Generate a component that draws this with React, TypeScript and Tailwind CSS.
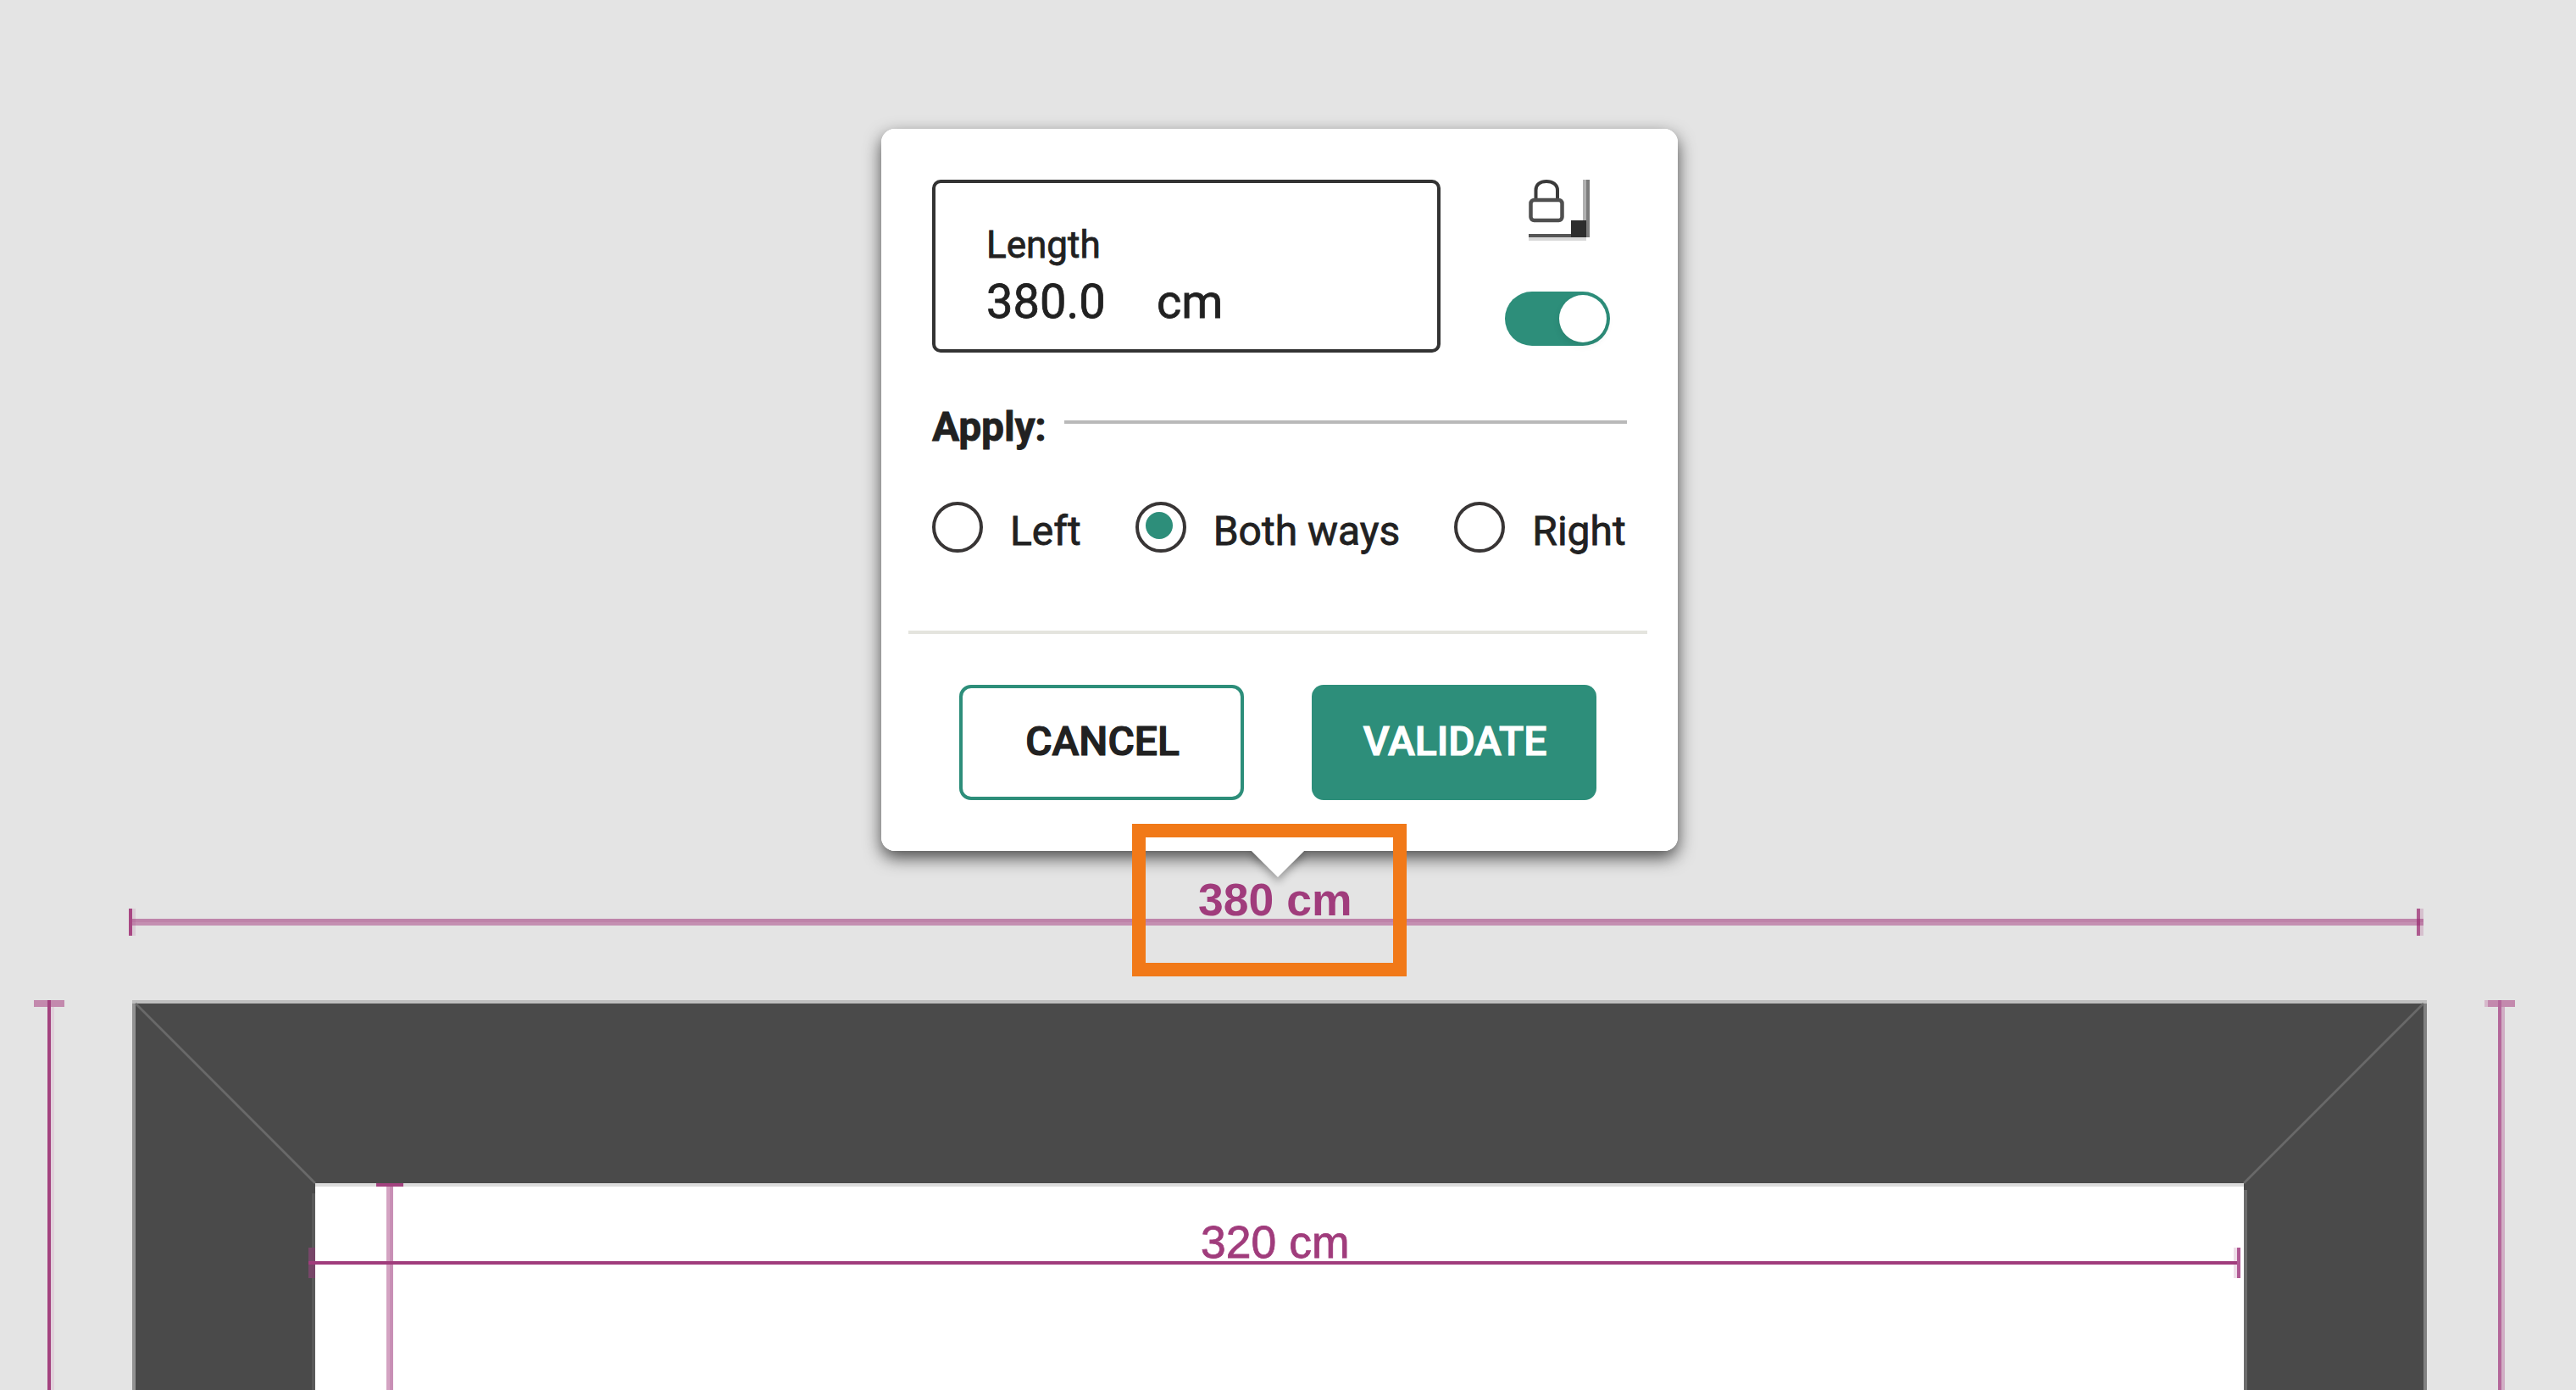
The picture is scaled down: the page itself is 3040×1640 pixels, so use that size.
import React, { useState } from 'react';

const DIRECTIONS = ["Left", "Both ways", "Right"];

function LockCornerIcon() {
  return (
    <svg width="76" height="76" viewBox="0 0 76 76" fill="none" className="block">
      <path d="M8.5 26V16.5C8.5 9.5 14 6 21 6S34 9.500 34 16.500V26" stroke="#3a3a3a" strokeWidth="4" />
      <rect x="2.500" y="28" width="37" height="24" rx="4" stroke="#4f4f4f" strokeWidth="4.500" />
      <rect x="64" y="4" width="4" height="68" fill="#b0b0b0" />
      <rect x="68" y="4" width="4" height="68" fill="#7c7c7c" />
      <rect x="0" y="68" width="68" height="4" fill="#565656" />
      <rect x="0" y="72" width="68" height="4" fill="#d9d9d9" />
      <rect x="50" y="52" width="18" height="20" fill="#2d2d2d" />
    </svg>
  );
}

function Frame() {
  return (
    <svg width="3040" height="1640" viewBox="0 0 3040 1640" className="absolute inset-0">
      {/* profile */}
      <rect x="160" y="1184" width="2700" height="456" fill="#4a4a4a" />
      <rect x="156" y="1180" width="2708" height="4" fill="#bfbfbf" />
      <rect x="156" y="1184" width="4" height="456" fill="#929292" />
      <rect x="2860" y="1184" width="4" height="456" fill="#808080" />
      <rect x="372" y="1396" width="2276" height="244" fill="#fff" />
      <rect x="372" y="1396" width="2276" height="4" fill="#dcdcdc" />
      <rect x="368" y="1408" width="4" height="232" fill="#5a5a5a" />
      <rect x="2648" y="1396" width="4" height="8" fill="#4a4a4a" />
      <rect x="2648" y="1404" width="4" height="236" fill="#6c6c6c" />
      <path d="M160 1184L372 1396M2860 1184L2648 1396" stroke="#696969" strokeWidth="2.800" />

      {/* outer width */}
      <rect x="156" y="1084" width="2704" height="4" fill="#be83a9" />
      <rect x="156" y="1088" width="2704" height="4" fill="#c48fb1" />
      <rect x="152" y="1072" width="4" height="32" fill="#a84783" />
      <rect x="156" y="1072" width="4" height="32" fill="#a3427f" opacity="0.15" />
      <rect x="2852" y="1072" width="4" height="32" fill="#ae5a8f" />
      <rect x="2852" y="1084" width="4" height="8" fill="#a3427f" />
      <rect x="2856" y="1072" width="4" height="32" fill="#a3427f" opacity="0.22" />
      <text x="1414" y="1080" fontSize="53.500" fontWeight="700" fill="#a03c7c" fontFamily="'Liberation Sans', Arial, sans-serif">380 cm</text>

      {/* outer heights */}
      <rect x="40" y="1180" width="36" height="8" fill="#c389ad" />
      <rect x="56" y="1180" width="4" height="460" fill="#a3427f" />
      <rect x="60" y="1188" width="4" height="452" fill="#e1d0db" />
      <rect x="2932" y="1180" width="4" height="8" fill="#d6b9cb" />
      <rect x="2936" y="1180" width="32" height="8" fill="#c389ad" />
      <rect x="2948" y="1180" width="4" height="460" fill="#b4679a" />
      <rect x="2952" y="1188" width="4" height="452" fill="#d0adc4" />

      {/* inner dimensions */}
      <rect x="456" y="1400" width="4" height="240" fill="#d4a3c2" />
      <rect x="460" y="1400" width="4" height="240" fill="#c88fb5" />
      <rect x="444" y="1396" width="32" height="4" fill="#a3427f" />
      <rect x="364" y="1472" width="8" height="36" fill="#774668" />
      <rect x="364" y="1488" width="2280" height="4" fill="#a03c7c" />
      <rect x="2636" y="1472" width="4" height="36" fill="#a3427f" opacity="0.18" />
      <rect x="2640" y="1472" width="4" height="36" fill="#b05a94" />
      <text x="1417" y="1484" fontSize="53.500" fill="#a03c7c" stroke="#a03c7c" strokeWidth="0.800" fontFamily="'Liberation Sans', Arial, sans-serif">320 cm</text>
    </svg>
  );
}

export default function App() {
  const [direction, setDirection] = useState("Both ways");
  const [locked, setLocked] = useState(true);

  return (
    <div className="relative w-[3040px] h-[1640px] overflow-hidden bg-[#e4e4e4] font-[Roboto,sans-serif] text-[#212121]">
      <Frame />

      <div className="absolute left-[1040px] top-[152px] w-[940px] h-[852px] rounded-[16px] bg-white shadow-[0_8px_20px_rgba(0,0,0,0.68)]">
        <div className="absolute left-[446px] bottom-[-22px] size-[44px] rotate-45 bg-white shadow-[4px_4px_10px_rgba(0,0,0,0.3)]" />
        <div className="relative flex h-full flex-col rounded-[16px] bg-white px-[60px] pt-[60px] [-webkit-text-stroke:0.8px]">
          <div className="flex">
            <label className="flex h-[204px] w-[600px] flex-col rounded-[10px] border-4 border-[#333] pl-[60px] pt-[47px]">
              <span className="text-[44px] leading-[52px]">Length</span>
              <span className="mt-[8px] flex text-[56px] leading-[66px]">
                <span className="w-[201px]">380.0</span>
                <span>cm</span>
              </span>
            </label>
            <div className="ml-[76px] flex flex-col">
              <div className="ml-[28px] -mt-[4px]"><LockCornerIcon /></div>
              <button
                onClick={() => setLocked(!locked)}
                className={`mt-[60px] flex h-[64px] w-[124px] items-center rounded-full bg-[#2d8e7a] px-1 ${locked ? "justify-end" : "justify-start"}`}
              >
                <span className="size-[56px] rounded-full bg-white shadow-[0_4px_8px_rgba(0,0,0,0.08)]" />
              </button>
            </div>
          </div>

          <div className="mt-[56px] flex h-[60px] items-start">
            <span className="mt-[2px] w-[156px] text-[48px] font-bold leading-[60px] tracking-[-0.2px]">Apply:</span>
            <span className="mt-[24px] h-1 flex-1 bg-[#b9b9b9]" />
          </div>

          <div className="mt-[60px] flex h-[60px] gap-[64px] whitespace-nowrap">
            {DIRECTIONS.map((d) => (
              <button key={d} onClick={() => setDirection(d)} className="flex">
                <span className="flex size-[60px] rounded-full border-4 border-[#383535] pl-[8px] pt-[8px]">
                  {direction === d && <span className="size-[32px] rounded-full bg-[#2d8e7a]" />}
                </span>
                <span className="ml-[32px] mt-[7px] text-[48px] leading-[56px]">{d}</span>
              </button>
            ))}
          </div>

          <div className="-ml-[28px] mt-[92px] h-1 w-[872px] shrink-0 bg-[#e4e4de]" />

          <div className="mt-[60px] flex gap-[80px] pl-[32px] text-[48px] font-medium">
            <button className="h-[136px] w-[336px] rounded-[14px] border-4 border-[#2d8e7a] pb-[2px] pl-[2px] [-webkit-text-stroke:1.2px]">CANCEL</button>
            <button className="h-[136px] w-[336px] rounded-[14px] bg-[#2d8e7a] pb-[2px] pl-[2px] text-white [-webkit-text-stroke:1.2px]">VALIDATE</button>
          </div>
        </div>
      </div>

      {/* callout around the edited dimension */}
      <div className="absolute left-[1336px] top-[972px] h-[180px] w-[324px] border-[16px] border-[#f17918]" />
    </div>
  );
}
